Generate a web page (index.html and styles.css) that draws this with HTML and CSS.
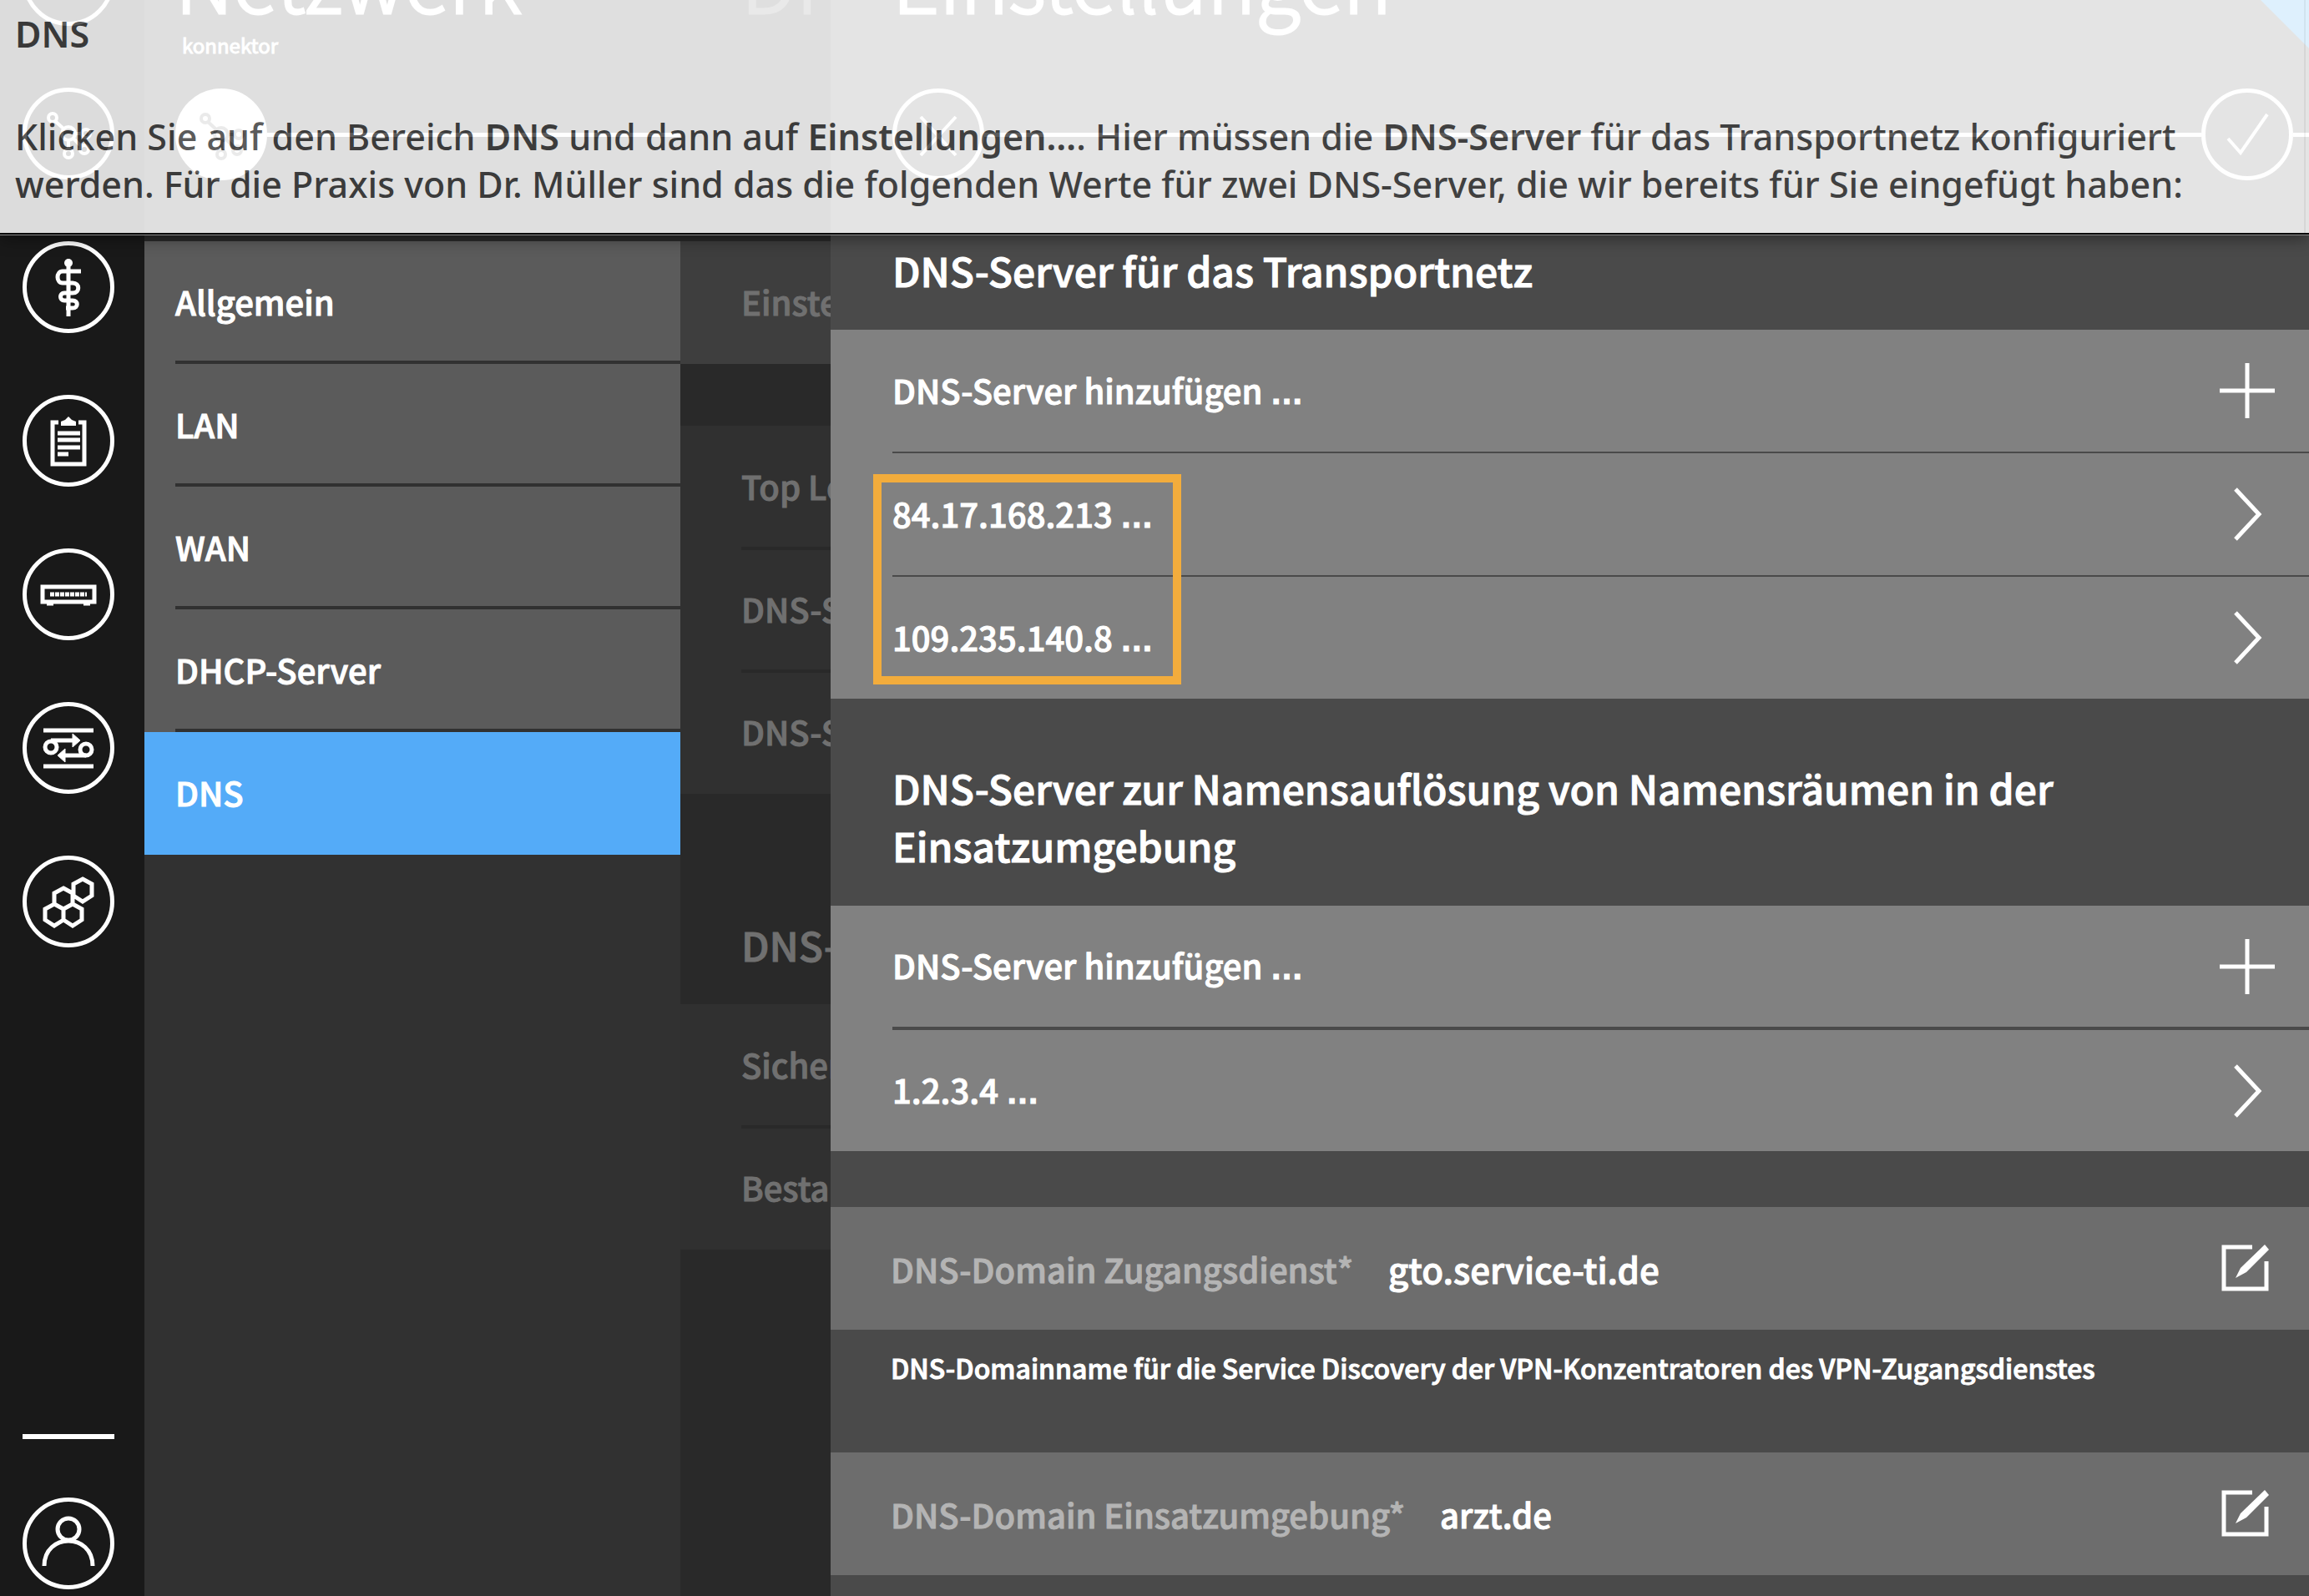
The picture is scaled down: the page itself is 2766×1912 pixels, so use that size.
FILE: index.html
```html
<!DOCTYPE html>
<html lang="de">
<head>
<meta charset="utf-8">
<title>DNS-Einstellungen</title>
<link rel="stylesheet" href="styles.css">
</head>
<body>
<svg class="defs" aria-hidden="true">
  <symbol id="network" viewBox="0 0 110 110"><g fill="none" stroke="currentColor" stroke-width="4"><circle cx="36" cy="36" r="5"/><circle cx="55" cy="55" r="8"/><circle cx="76" cy="55" r="5"/><circle cx="55" cy="79" r="5"/><circle cx="74" cy="74" r="5"/><path d="M39 40l10 9M63 55h8M55 63v11M61 61l9 9"/></g></symbol>
  <symbol id="plus" viewBox="0 0 66 66"><path d="M33 0v66M0 33h66" fill="none" stroke="currentColor" stroke-width="5"/></symbol>
  <symbol id="chevron" viewBox="0 0 66 66"><path d="M19 3l28 30-28 30" fill="none" stroke="currentColor" stroke-width="5"/></symbol>
  <symbol id="edit" viewBox="0 0 66 66"><path d="M39 7H5v50h51V24" fill="none" stroke="currentColor" stroke-width="5"/><path d="M54 4l5 6-27 27-13 7 6-12z" fill="currentColor"/></symbol>
</svg>

<div class="app">
  <nav class="rail" aria-label="Hauptmenü">
    <div class="rail-items">
      <a class="round" href="#start" aria-label="Start"></a>
      <a class="round" href="#netzwerk" aria-label="Netzwerk"><svg viewBox="0 0 110 110"><use href="#network"/></svg></a>
      <a class="round" href="#praxis" aria-label="Praxis"><svg viewBox="0 0 110 110"><circle cx="55" cy="26" r="5" fill="currentColor"/><path d="M55 24v66M70 36H48c-8 0-8 14 0 14h12c9 0 9 12 0 12H50c-6 0-6 9 0 9h10c7 0 7 9 0 9h-8" fill="none" stroke="currentColor" stroke-width="5"/></svg></a>
      <a class="round" href="#protokoll" aria-label="Protokoll"><svg viewBox="0 0 110 110"><path d="M43 33H36v50h38V33H67M42 46h27M42 54h27M42 63h27M42 71h13" fill="none" stroke="currentColor" stroke-width="5"/><path d="M46 37v-5l5-2 4-4 4 4 5 2v5z" fill="currentColor"/></svg></a>
      <a class="round" href="#geraete" aria-label="Geräte"><svg viewBox="0 0 110 110"><path d="M24 46h62v18H24z" fill="none" stroke="currentColor" stroke-width="5"/><path d="M33 55h44" stroke="currentColor" stroke-width="5" stroke-dasharray="5 1"/><path d="M29 67h8M73 67h8" stroke="currentColor" stroke-width="3"/></svg></a>
      <a class="round" href="#verbindung" aria-label="Verbindungen"><svg viewBox="0 0 110 110"><g fill="none" stroke="currentColor" stroke-width="5"><path d="M25 34h60M25 77h60M34 46h32M76 64H46"/><circle cx="34" cy="54" r="7"/><circle cx="76" cy="57" r="7"/></g><path d="M60 38l9 8-9 8zM51 56l-9 8 9 8z" fill="currentColor" stroke="currentColor"/></svg></a>
      <a class="round" href="#module" aria-label="Module"><svg viewBox="0 0 110 110"><g fill="none" stroke="currentColor" stroke-width="5"><path d="M72 28l11 6v14l-11 7-11-7V34zM49 39l11 6v13l-11 6-11-6V45zM38 58l11 6v13l-11 7-11-7V64zM60 58l11 6v13l-11 7-11-7V64z"/></g></svg></a>
    </div>
    <div class="rail-user">
      <a class="round" href="#benutzer" aria-label="Benutzer"><svg viewBox="0 0 110 110"><g fill="none" stroke="currentColor" stroke-width="5"><circle cx="55" cy="38" r="13"/><path d="M26 82c0-40 58-40 58 0"/></g></svg></a>
    </div>
  </nav>

  <section class="menu">
    <header class="head">
      <h1 class="title">Netzwerk</h1>
      <p class="subtitle">konnektor</p>
      <div class="bar"><span class="round solid"><svg viewBox="0 0 110 110"><use href="#network"/></svg></span></div>
    </header>
    <ul class="menu-list">
      <li><a class="menu-item" href="#allgemein">Allgemein</a></li>
      <li><a class="menu-item" href="#lan">LAN</a></li>
      <li><a class="menu-item" href="#wan">WAN</a></li>
      <li><a class="menu-item" href="#dhcp">DHCP-Server</a></li>
      <li class="current"><a class="menu-item" href="#dns" aria-current="page">DNS</a></li>
    </ul>
  </section>

  <section class="behind">
    <header class="head"><h2 class="title">DNS</h2></header>
    <div class="behind-link"><p class="behind-row">Einstellungen</p></div>
    <div class="behind-group">
      <p class="behind-row">Top Level Domain</p>
      <p class="behind-row">DNS-Server</p>
      <p class="behind-row">DNS-Server</p>
    </div>
    <h3 class="behind-title">DNS-Server</h3>
    <div class="behind-group">
      <p class="behind-row">Sicherheit</p>
      <p class="behind-row">Bestand</p>
    </div>
  </section>

  <main class="panel">
    <span class="corner"></span>
    <header class="head">
      <h2 class="title">Einstellungen</h2>
      <div class="bar spread">
        <button class="round" type="button" aria-label="Abbrechen"><svg viewBox="0 0 110 110"><path d="M34 34l42 46M76 34L34 80" stroke="currentColor" stroke-width="4"/></svg></button>
        <button class="round" type="button" aria-label="Übernehmen"><svg viewBox="0 0 110 110"><path d="M32 60l15 17 32-46" fill="none" stroke="currentColor" stroke-width="4"/></svg></button>
      </div>
    </header>
    <h3 class="group-title first">DNS-Server für das Transportnetz</h3>
    <div class="group thin">
      <button class="row" type="button"><span>DNS-Server hinzufügen <span class="dots">…</span></span><svg class="icon"><use href="#plus"/></svg></button>
      <button class="row" type="button"><span>84.17.168.213 <span class="dots">…</span></span><svg class="icon"><use href="#chevron"/></svg></button>
      <button class="row" type="button"><span>109.235.140.8 <span class="dots">…</span></span><svg class="icon"><use href="#chevron"/></svg></button>
      <span class="marker"></span>
    </div>
    <h3 class="group-title">DNS-Server zur Namensauflösung von Namensräumen in der Einsatzumgebung</h3>
    <div class="group">
      <button class="row" type="button"><span>DNS-Server hinzufügen <span class="dots">…</span></span><svg class="icon"><use href="#plus"/></svg></button>
      <button class="row" type="button"><span>1.2.3.4 <span class="dots">…</span></span><svg class="icon"><use href="#chevron"/></svg></button>
    </div>
    <div class="field">
      <label class="field-label" for="zugang">DNS-Domain Zugangsdienst*</label>
      <input class="field-input large" id="zugang" value="gto.service-ti.de">
      <svg class="icon"><use href="#edit"/></svg>
    </div>
    <p class="help">DNS-Domainname für die Service Discovery der VPN-Konzentratoren des VPN-Zugangsdienstes</p>
    <div class="field">
      <label class="field-label" for="umgebung">DNS-Domain Einsatzumgebung*</label>
      <input class="field-input" id="umgebung" value="arzt.de">
      <svg class="icon"><use href="#edit"/></svg>
    </div>
  </main>
</div>

<div class="note-wrap">
<aside class="note">
  <h2 class="note-title">DNS</h2>
  <p class="note-text">Klicken Sie auf den Bereich <b>DNS</b> und dann auf <b>Einstellungen…</b>. Hier müssen die <b>DNS-Server</b> für das Transportnetz konfiguriert werden. Für die Praxis von Dr. Müller sind das die folgenden Werte für zwei DNS-Server, die wir bereits für Sie eingefügt haben:</p>
</aside>
</div>
</body>
</html>
```
FILE: styles.css
```css
* { box-sizing: border-box; }
body {
  margin: 0;
  height: 100vh;
  overflow: hidden;
  background: #4a4a4a;
  color: #fff;
  font: 500 40px/60px "Noto Sans CJK SC", sans-serif;
}
h1, h2, h3, p, ul { margin: 0; padding: 0; font-weight: 500; }
ul { list-style: none; }
a { color: inherit; text-decoration: none; }
button, input { font: inherit; color: inherit; border: 0; background: none; padding: 0; border-radius: 0; }
svg { display: block; }
.defs { position: absolute; width: 0; height: 0; }

.app {
  display: grid;
  grid-template-columns: 173px 642px 180px minmax(0, 1fr);
  height: 100vh;
  overflow: hidden;
  -webkit-text-stroke: 1px currentColor;
}

.round {
  display: block;
  flex: none;
  width: 110px;
  height: 110px;
  border: 5px solid #fff;
  border-radius: 50%;
}
.round svg { width: 110px; height: 110px; margin: -5px; }
.solid { background: #fff; color: #777; }

/* icon rail */
.rail {
  display: flex;
  flex-direction: column;
  justify-content: space-between;
  padding: 0 0 8px 27px;
  background: #191919;
}
.rail-items { display: grid; gap: 74px; margin-top: -79px; }
.rail-user { width: 110px; padding-top: 70px; border-top: 6px solid #fff; }

/* column heads */
.head { height: 289px; overflow: hidden; }
.title { margin-top: -77px; font-size: 98px; font-weight: 300; line-height: 100px; white-space: nowrap; -webkit-text-stroke-width: 3px; }
.subtitle { margin-top: 11px; padding-left: 8px; font-size: 24px; font-weight: 400; line-height: 40px; }
.bar { display: flex; align-items: center; margin-top: 83px; }
.subtitle + .bar { margin-top: 32px; }
.bar::after { content: ""; order: 1; flex: 1; height: 5px; background: #fff; }

/* section menu */
.menu { background: #313131; }
.menu .head { padding-left: 37px; background: #2a2a2a; }
.menu-list li { height: 147px; padding-left: 37px; background: #5b5b5b; }
.menu-item { display: flex; align-items: center; height: 147px; border-bottom: 4px solid #313131; }
.menu-list .current { background: #54abf8; }
.current .menu-item { border-color: transparent; }

/* page behind the open panel */
.behind { overflow: hidden; background: #292929; color: #707070; white-space: nowrap; }
.behind .head, .behind-row, .behind-title { padding-left: 73px; }
.behind-link { background: #3e3e3e; margin-bottom: 74px; }
.behind-group { background: #303030; }
.behind-row { position: relative; height: 147px; line-height: 145px; }
.behind-row + .behind-row::before { content: ""; position: absolute; top: -2px; left: 73px; right: 0; height: 4px; background: #292929; }
.behind-title { height: 252px; padding-top: 145px; font-size: 48px; line-height: 70px; }

/* settings panel */
.panel { position: relative; min-width: 0; background: #4a4a4a; overflow: hidden; }
.panel .head { padding-left: 74px; }
.spread .round:last-child { order: 2; }
.spread { position: relative; padding-right: 19px; }
.spread::before { content: ""; position: absolute; right: 0; width: 19px; height: 5px; background: #fff; }
.corner { position: absolute; top: 0; right: 0; border-top: 58px solid #26a0f5; border-left: 58px solid transparent; }
.group-title { padding: 72px 200px 38px 74px; font-size: 48px; line-height: 69px; }
.first { padding-top: 0; padding-bottom: 37px; }
.group { position: relative; background: #818181; padding-left: 74px; }
.row {
  display: flex;
  align-items: center;
  justify-content: space-between;
  width: 100%;
  height: 149px;
  padding-right: 41px;
  border-bottom: 4px solid #4a4a4a;
  text-align: left;
}
.thin .row { height: 148px; border-bottom-width: 2px; }
.group .row:nth-last-of-type(1) { height: 145px; border-bottom: 0; }
.thin .row:nth-last-of-type(1) { height: 146px; }
.dots { font-family: "Liberation Sans", sans-serif; font-weight: 700; }
.icon { flex: none; width: 66px; height: 66px; }
.marker { position: absolute; top: 173px; left: 51px; width: 369px; height: 252px; border: 10px solid #f2ac3c; }
.field { display: flex; align-items: center; gap: 42px; height: 147px; padding: 0 41px 0 72px; background: #6d6d6d; }
.group + .field { margin-top: 67px; }
.field-label { color: #b4b4b4; }
.field-input { flex: 1; min-width: 0; }
.large { font-size: 42px; }
.help { height: 147px; padding: 20px 72px; font-size: 32px; line-height: 50px; }

/* instruction text over the app */
.note-wrap { position: absolute; top: 0; left: 0; right: 0; border-bottom: 1px solid #888; box-shadow: 0 4px 18px rgba(0, 0, 0, .4); }
.note {
  height: 281px;
  padding: 12px 100px 0 18px;
  background: linear-gradient(to left, #fff 4px, #efefef 4px 6px, #fff 6px);
  border-bottom: 2px solid #000;
  color: #3f3f3f;
  opacity: .85;
  font: 400 43px/57px "Noto Sans", sans-serif;
}
.note-title { margin-bottom: 66px; font-size: 43px; font-weight: 600; }
.note b { font-weight: 600; }
```
